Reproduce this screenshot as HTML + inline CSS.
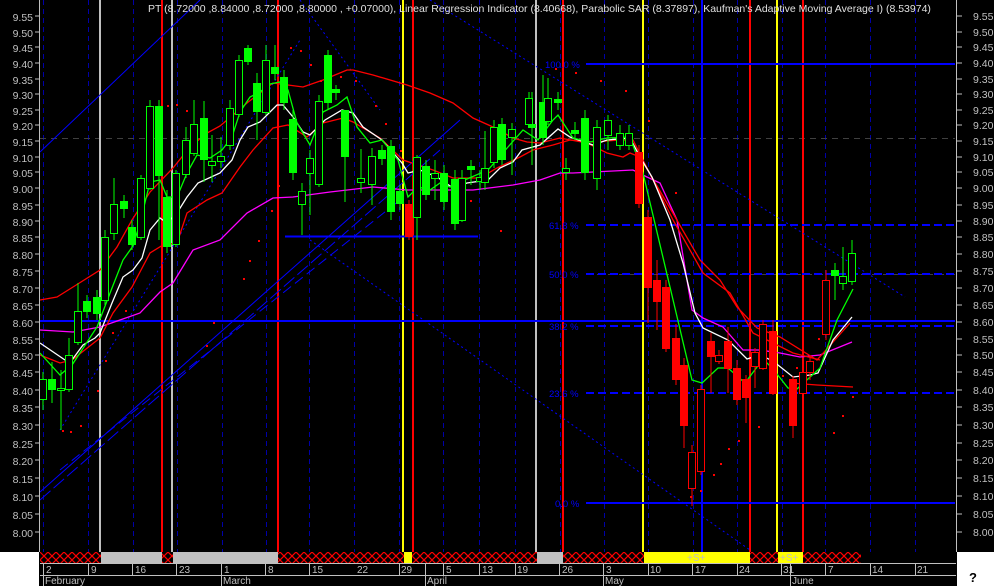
<!DOCTYPE html>
<html><head><meta charset="utf-8"><style>
html,body{margin:0;padding:0;background:#000;width:994px;height:586px;overflow:hidden}
svg{display:block}
text{font-family:"Liberation Sans",sans-serif;font-size:10.5px}
</style></head><body>
<svg width="994" height="586" viewBox="0 0 994 586" xmlns="http://www.w3.org/2000/svg">
<defs>
<pattern id="hx" width="8" height="8" patternUnits="userSpaceOnUse">
<rect width="8" height="8" fill="#000"/>
<path d="M0 0L8 8M8 0L0 8" stroke="#ff0000" stroke-width="1.2"/>
</pattern>
</defs>
<rect width="994" height="586" fill="#000"/>
<g stroke="#0000a8" stroke-width="1" stroke-dasharray="5,4">
<line x1="43.5" y1="0" x2="43.5" y2="552"/><line x1="88.5" y1="0" x2="88.5" y2="552"/><line x1="133.5" y1="0" x2="133.5" y2="552"/><line x1="177.5" y1="0" x2="177.5" y2="552"/><line x1="222.5" y1="0" x2="222.5" y2="552"/><line x1="266.5" y1="0" x2="266.5" y2="552"/><line x1="309.5" y1="0" x2="309.5" y2="552"/><line x1="354.5" y1="0" x2="354.5" y2="552"/><line x1="399.5" y1="0" x2="399.5" y2="552"/><line x1="443.5" y1="0" x2="443.5" y2="552"/><line x1="479.5" y1="0" x2="479.5" y2="552"/><line x1="515.5" y1="0" x2="515.5" y2="552"/><line x1="560.5" y1="0" x2="560.5" y2="552"/><line x1="604.5" y1="0" x2="604.5" y2="552"/><line x1="648.5" y1="0" x2="648.5" y2="552"/><line x1="693.5" y1="0" x2="693.5" y2="552"/><line x1="737.5" y1="0" x2="737.5" y2="552"/><line x1="782.5" y1="0" x2="782.5" y2="552"/><line x1="825.5" y1="0" x2="825.5" y2="552"/><line x1="870.5" y1="0" x2="870.5" y2="552"/><line x1="915.5" y1="0" x2="915.5" y2="552"/>
</g>
<g stroke="#404040" stroke-dasharray="6,5"><line x1="40" y1="138.5" x2="955" y2="138.5"/><line x1="586" y1="274.5" x2="955" y2="274.5"/></g>
<g stroke-width="2">
<line x1="100" y1="0" x2="100" y2="552" stroke="#c0c0c0"/>
<line x1="162" y1="0" x2="162" y2="552" stroke="#ff0000"/>
<line x1="172" y1="0" x2="172" y2="552" stroke="#c0c0c0"/>
<line x1="278" y1="0" x2="278" y2="552" stroke="#ff0000"/>
<line x1="403" y1="0" x2="403" y2="552" stroke="#ffff00"/>
<line x1="413" y1="0" x2="413" y2="552" stroke="#ff0000"/>
<line x1="536" y1="0" x2="536" y2="552" stroke="#c0c0c0"/>
<line x1="563" y1="0" x2="563" y2="552" stroke="#ff0000"/>
<line x1="643" y1="0" x2="643" y2="552" stroke="#ffff00"/>
<line x1="702" y1="0" x2="702" y2="552" stroke="#0000ff"/>
<line x1="750" y1="0" x2="750" y2="552" stroke="#ff0000"/>
<line x1="777" y1="0" x2="777" y2="552" stroke="#ffff00"/>
<line x1="803" y1="0" x2="803" y2="552" stroke="#ff0000"/>
</g>
<g stroke="#0000ff" stroke-width="1" fill="none">
<line x1="40" y1="152" x2="200" y2="0"/>
<line x1="40" y1="492" x2="460" y2="120"/>
<line x1="40" y1="500" x2="440" y2="150" stroke-dasharray="14,4"/>
<line x1="60" y1="470" x2="400" y2="200" stroke-dasharray="10,5"/>
<line x1="60" y1="430" x2="300" y2="40" stroke-dasharray="2,3"/>
<line x1="430" y1="0" x2="905" y2="297" stroke-dasharray="2,3"/>
<line x1="300" y1="0" x2="380" y2="110" stroke-dasharray="2,3"/>
<line x1="310" y1="240" x2="750" y2="550" stroke-dasharray="2,3"/>
<line x1="285" y1="236.5" x2="478" y2="236.5" stroke-width="2"/>
<line x1="40" y1="321" x2="955" y2="321" stroke-width="2"/>
<line x1="586" y1="64" x2="955" y2="64" stroke-width="2"/>
<line x1="586" y1="225" x2="955" y2="225" stroke-width="2" stroke-dasharray="8,4"/>
<line x1="586" y1="274" x2="955" y2="274" stroke-width="2" stroke-dasharray="8,4"/>
<line x1="586" y1="326" x2="955" y2="326" stroke-width="2" stroke-dasharray="8,4"/>
<line x1="586" y1="393" x2="955" y2="393" stroke-width="2" stroke-dasharray="8,4"/>
<line x1="586" y1="503" x2="955" y2="503" stroke-width="2"/>
</g>
<g fill="#0000ff" style="font-size:9.5px"><text x="545" y="68" style="font-size:9.5px">100.0 %</text><text x="549" y="229" style="font-size:9.5px">61.8 %</text><text x="549" y="278" style="font-size:9.5px">50.0 %</text><text x="549" y="330" style="font-size:9.5px">38.2 %</text><text x="549" y="397" style="font-size:9.5px">23.6 %</text><text x="555" y="507" style="font-size:9.5px">0.0 %</text></g>
<g fill="#ff0000">
<rect x="62" y="430" width="2" height="2"/><rect x="70" y="431" width="2" height="2"/><rect x="80" y="425" width="2" height="2"/><rect x="97" y="390" width="2" height="2"/><rect x="105" y="360" width="2" height="2"/><rect x="112" y="332" width="2" height="2"/><rect x="125" y="310" width="2" height="2"/><rect x="167" y="105" width="2" height="2"/><rect x="176" y="104" width="2" height="2"/><rect x="186" y="110" width="2" height="2"/><rect x="206" y="345" width="2" height="2"/><rect x="213" y="322" width="2" height="2"/><rect x="243" y="278" width="2" height="2"/><rect x="249" y="260" width="2" height="2"/><rect x="258" y="240" width="2" height="2"/><rect x="271" y="210" width="2" height="2"/><rect x="278" y="185" width="2" height="2"/><rect x="290" y="47" width="2" height="2"/><rect x="300" y="50" width="2" height="2"/><rect x="310" y="64" width="2" height="2"/><rect x="320" y="80" width="2" height="2"/><rect x="330" y="65" width="2" height="2"/><rect x="340" y="76" width="2" height="2"/><rect x="355" y="80" width="2" height="2"/><rect x="375" y="105" width="2" height="2"/><rect x="385" y="123" width="2" height="2"/><rect x="400" y="150" width="2" height="2"/><rect x="418" y="168" width="2" height="2"/><rect x="445" y="180" width="2" height="2"/><rect x="470" y="200" width="2" height="2"/><rect x="500" y="230" width="2" height="2"/><rect x="555" y="68" width="2" height="2"/><rect x="575" y="72" width="2" height="2"/><rect x="600" y="80" width="2" height="2"/><rect x="625" y="90" width="2" height="2"/><rect x="648" y="120" width="2" height="2"/><rect x="675" y="192" width="2" height="2"/><rect x="690" y="496" width="2" height="2"/><rect x="700" y="490" width="2" height="2"/><rect x="713" y="474" width="2" height="2"/><rect x="720" y="463" width="2" height="2"/><rect x="728" y="448" width="2" height="2"/><rect x="738" y="440" width="2" height="2"/><rect x="758" y="426" width="2" height="2"/><rect x="782" y="375" width="2" height="2"/><rect x="796" y="367" width="2" height="2"/><rect x="818" y="338" width="2" height="2"/><rect x="833" y="432" width="2" height="2"/><rect x="842" y="415" width="2" height="2"/><rect x="852" y="396" width="2" height="2"/>
</g>
<g fill="none" stroke-width="1.3">
<polyline stroke="#ff00ff" points="40,330 73,332 100,327 120,320 140,313 160,292 173,283 193,250 220,240 247,213 273,198 293,197 330,192 373,187 407,190 473,190 513,185 540,180 560,173 573,173 633,170 647,177 660,183 677,220 692,310 703,318 723,327 743,350 760,350 780,353 800,357 820,355 852,342"/>
<polyline stroke="#ff0000" points="40,300 57,297 73,287 100,270 117,247 132,220 150,192 173,168 190,147 207,133 220,126 233,115 247,103 273,83 303,87 323,80 347,70 353,70 373,75 407,85 430,93 453,103 473,118 493,127 513,138 527,142 540,143 560,138 587,143 607,153 623,157 630,153 640,157 667,203 700,260 720,280 737,307 757,328 780,337 817,360 850,323"/>
<polyline stroke="#ff0000" points="40,355 60,363 72,360 100,338 113,313 132,287 150,253 163,245 177,243 187,213 207,200 222,193 240,167 253,150 273,128 288,125 307,137 323,123 343,118 353,122 380,138 403,160 433,170 453,178 480,178 497,168 520,157 533,150 553,145 570,140 593,142 620,140 633,140 643,160 673,220 703,273 730,293 753,333 793,353 820,360"/>
<polyline stroke="#ff0000" points="790,383 817,385 853,387"/>
<polyline stroke="#ffffff" points="40,343 65,360 72,360 83,345 95,338 100,333 112,303 123,277 133,270 142,258 150,230 160,218 167,223 177,213 187,197 198,183 220,173 232,160 240,140 248,127 260,122 277,105 283,105 293,117 303,132 310,135 325,120 342,110 353,113 363,127 382,140 402,163 408,173 420,170 437,177 453,188 467,183 488,180 500,168 513,162 522,150 540,145 558,129 570,137 593,145 607,140 630,138 640,157 652,177 670,220 683,263 695,313 703,328 728,340 747,359 760,355 773,361 793,377 810,375 818,373 833,340 852,317"/>
<polyline stroke="#00ff00" points="40,353 60,375 72,365 97,327 112,288 123,260 133,246 140,223 150,182 160,180 167,197 177,197 187,173 197,155 210,158 222,150 232,137 240,112 250,97 260,92 270,84 280,82 288,90 297,123 310,145 323,112 337,105 347,97 357,127 370,143 382,140 398,160 408,197 418,187 430,190 440,183 450,187 460,182 488,170 508,147 523,130 538,140 553,120 558,115 573,138 590,142 607,138 630,137 643,173 692,380 702,383 718,368 728,368 745,383 763,359 773,369 788,388 797,389 820,368 837,320 853,289"/>
</g>
<g stroke="#00ff00" fill="#00ff00">
<path d="M52 362V403M87 295V318M97 290V320M124 195V218M132 220V250M159 100V240M167 190V253M204 101V182M248 45V65M257 73V140M275 45V80M284 70V110M293 110V180M328 50V110M336 85V100M345 115V202M382 145V165M391 140V220M400 185V210M426 160V200M444 165V210M455 170V230M471 160V185M502 118V165M532 92V165M543 75V145M558 92V110M575 122V140M585 110V180M835 263V300" fill="none"/>
<rect x="48.5" y="379.5" width="7" height="10"/><rect x="83.5" y="301.5" width="7" height="10"/><rect x="93.5" y="297.5" width="7" height="16"/><rect x="120.5" y="201.5" width="7" height="7"/><rect x="128.5" y="227.5" width="7" height="17"/><rect x="155.5" y="106.5" width="7" height="69"/><rect x="163.5" y="197.5" width="7" height="49"/><rect x="200.5" y="118.5" width="7" height="41"/><rect x="244.5" y="48.5" width="7" height="13"/><rect x="253.5" y="83.5" width="7" height="28"/><rect x="271.5" y="67.5" width="7" height="6"/><rect x="280.5" y="77.5" width="7" height="25"/><rect x="289.5" y="119.5" width="7" height="53"/><rect x="324.5" y="55.5" width="7" height="47"/><rect x="332.5" y="89.5" width="7" height="3"/><rect x="341.5" y="110.5" width="7" height="46"/><rect x="378.5" y="150.5" width="7" height="8"/><rect x="387.5" y="146.5" width="7" height="65"/><rect x="396.5" y="191.5" width="7" height="12"/><rect x="422.5" y="166.5" width="7" height="28"/><rect x="440.5" y="173.5" width="7" height="28"/><rect x="451.5" y="179.5" width="7" height="44"/><rect x="467.5" y="166.5" width="7" height="3"/><rect x="498.5" y="124.5" width="7" height="35"/><rect x="528.5" y="124.5" width="7" height="3"/><rect x="539.5" y="102.5" width="7" height="35"/><rect x="554.5" y="99.5" width="7" height="3"/><rect x="571.5" y="130.5" width="7" height="3"/><rect x="581.5" y="118.5" width="7" height="54"/><rect x="831.5" y="270.5" width="7" height="5"/>
</g>
<g stroke="#00ff00" fill="#000">
<path d="M43 372V410M61 370V430M69 338V392M78 283V345M105 230V305M114 178V240M141 175V240M150 100V190M176 170V247M186 127V178M194 100V156M212 135V182M221 137V168M230 100V150M239 55V117M266 45V115M302 183V235M310 150V215M319 95V187M361 149V193M372 148V205M417 155V240M435 160V200M462 170V222M480 170V190M485 131V190M494 120V168M512 123V175M529 92V128M548 78V125M566 158V180M597 120V190M608 115V150M620 125V150M629 125V150M843 247V290M852 240V285" fill="none"/>
<rect x="39.5" y="379.5" width="7" height="20"/><rect x="57.5" y="388.5" width="7" height="2"/><rect x="65.5" y="355.5" width="7" height="34"/><rect x="74.5" y="311.5" width="7" height="31"/><rect x="101.5" y="237.5" width="7" height="63"/><rect x="110.5" y="204.5" width="7" height="29"/><rect x="137.5" y="178.5" width="7" height="59"/><rect x="146.5" y="106.5" width="7" height="82"/><rect x="172.5" y="173.5" width="7" height="71"/><rect x="182.5" y="140.5" width="7" height="34"/><rect x="190.5" y="124.5" width="7" height="29"/><rect x="208.5" y="161.5" width="7" height="4"/><rect x="217.5" y="156.5" width="7" height="5"/><rect x="226.5" y="108.5" width="7" height="37"/><rect x="235.5" y="60.5" width="7" height="54"/><rect x="262.5" y="60.5" width="7" height="52"/><rect x="298.5" y="191.5" width="7" height="13"/><rect x="306.5" y="158.5" width="7" height="15"/><rect x="315.5" y="101.5" width="7" height="83"/><rect x="357.5" y="178.5" width="7" height="4"/><rect x="368.5" y="156.5" width="7" height="28"/><rect x="413.5" y="157.5" width="7" height="60"/><rect x="431.5" y="173.5" width="7" height="5"/><rect x="458.5" y="178.5" width="7" height="42"/><rect x="476.5" y="177.5" width="7" height="4"/><rect x="481.5" y="168.5" width="7" height="14"/><rect x="490.5" y="127.5" width="7" height="35"/><rect x="508.5" y="129.5" width="7" height="8"/><rect x="525.5" y="98.5" width="7" height="26"/><rect x="544.5" y="98.5" width="7" height="23"/><rect x="562.5" y="168.5" width="7" height="4"/><rect x="593.5" y="127.5" width="7" height="51"/><rect x="604.5" y="120.5" width="7" height="15"/><rect x="616.5" y="133.5" width="7" height="12"/><rect x="625.5" y="133.5" width="7" height="12"/><rect x="839.5" y="276.5" width="7" height="7"/><rect x="848.5" y="253.5" width="7" height="28"/>
</g>
<g stroke="#ff0000" fill="#ff0000">
<path d="M409 200V240M639 145V208M648 210V323M657 260V330M666 280V352M676 324V385M684 358V448M711 333V393M728 327V393M737 360V405M746 375V423M773 320V395M793 376V438" fill="none"/>
<rect x="405.5" y="204.5" width="7" height="32"/><rect x="635.5" y="152.5" width="7" height="51"/><rect x="644.5" y="217.5" width="7" height="70"/><rect x="653.5" y="280.5" width="7" height="21"/><rect x="662.5" y="287.5" width="7" height="61"/><rect x="672.5" y="338.5" width="7" height="41"/><rect x="680.5" y="365.5" width="7" height="60"/><rect x="707.5" y="341.5" width="7" height="15"/><rect x="724.5" y="341.5" width="7" height="27"/><rect x="733.5" y="368.5" width="7" height="31"/><rect x="742.5" y="379.5" width="7" height="18"/><rect x="769.5" y="331.5" width="7" height="62"/><rect x="789.5" y="379.5" width="7" height="46"/>
</g>
<g stroke="#ff0000" fill="#000">
<path d="M692 445V506M701 385V475M719 350V364M755 348V388M763 320V370M803 362V407M810 355V380M826 270V340" fill="none"/>
<rect x="688.5" y="452.5" width="7" height="36"/><rect x="697.5" y="389.5" width="7" height="82"/><rect x="715.5" y="355.5" width="7" height="6"/><rect x="751.5" y="352.5" width="7" height="14"/><rect x="759.5" y="324.5" width="7" height="44"/><rect x="799.5" y="372.5" width="7" height="21"/><rect x="806.5" y="361.5" width="7" height="11"/><rect x="822.5" y="280.5" width="7" height="54"/>
</g>
<text x="148" y="12" fill="#e0e0e0">PT (8.72000 ,8.84000 ,8.72000 ,8.80000 , +0.07000), Linear Regression Indicator (8.40668), Parabolic SAR (8.37897), Kaufman's Adaptive Moving Average I) (8.53974)</text>
<g stroke="#c0c0c0" stroke-width="1">
<line x1="39.5" y1="0" x2="39.5" y2="552"/>
<line x1="956.5" y1="0" x2="956.5" y2="552"/>
</g>
<g fill="#c0c0c0" text-anchor="end">
<text x="33" y="21">9.55</text><text x="33" y="37">9.50</text><text x="33" y="52">9.45</text><text x="33" y="68">9.40</text><text x="33" y="84">9.35</text><text x="33" y="99">9.30</text><text x="33" y="115">9.25</text><text x="33" y="130">9.20</text><text x="33" y="146">9.15</text><text x="33" y="162">9.10</text><text x="33" y="177">9.05</text><text x="33" y="193">9.00</text><text x="33" y="210">8.95</text><text x="33" y="226">8.90</text><text x="33" y="242">8.85</text><text x="33" y="259">8.80</text><text x="33" y="276">8.75</text><text x="33" y="293">8.70</text><text x="33" y="310">8.65</text><text x="33" y="327">8.60</text><text x="33" y="344">8.55</text><text x="33" y="360">8.50</text><text x="33" y="377">8.45</text><text x="33" y="395">8.40</text><text x="33" y="412">8.35</text><text x="33" y="430">8.30</text><text x="33" y="448">8.25</text><text x="33" y="465">8.20</text><text x="33" y="483">8.15</text><text x="33" y="501">8.10</text><text x="33" y="519">8.05</text><text x="33" y="537">8.00</text>
</g>
<g fill="#c0c0c0">
<text x="973" y="20">9.55</text><text x="973" y="36">9.50</text><text x="973" y="51">9.45</text><text x="973" y="67">9.40</text><text x="973" y="83">9.35</text><text x="973" y="98">9.30</text><text x="973" y="114">9.25</text><text x="973" y="129">9.20</text><text x="973" y="145">9.15</text><text x="973" y="161">9.10</text><text x="973" y="176">9.05</text><text x="973" y="192">9.00</text><text x="973" y="209">8.95</text><text x="973" y="225">8.90</text><text x="973" y="241">8.85</text><text x="973" y="258">8.80</text><text x="973" y="275">8.75</text><text x="973" y="292">8.70</text><text x="973" y="309">8.65</text><text x="973" y="326">8.60</text><text x="973" y="343">8.55</text><text x="973" y="359">8.50</text><text x="973" y="376">8.45</text><text x="973" y="394">8.40</text><text x="973" y="411">8.35</text><text x="973" y="429">8.30</text><text x="973" y="447">8.25</text><text x="973" y="464">8.20</text><text x="973" y="482">8.15</text><text x="973" y="500">8.10</text><text x="973" y="518">8.05</text><text x="973" y="536">8.00</text>
</g>
<g stroke="#c0c0c0">
<path d="M35 16H39M35 32H39M35 47H39M35 63H39M35 79H39M35 94H39M35 110H39M35 125H39M35 141H39M35 157H39M35 172H39M35 188H39M35 205H39M35 221H39M35 237H39M35 254H39M35 271H39M35 288H39M35 305H39M35 322H39M35 339H39M35 355H39M35 372H39M35 390H39M35 407H39M35 425H39M35 443H39M35 460H39M35 478H39M35 496H39M35 514H39M35 532H39"/>
<path d="M957 16H962M957 32H962M957 47H962M957 63H962M957 79H962M957 94H962M957 110H962M957 125H962M957 141H962M957 157H962M957 172H962M957 188H962M957 205H962M957 221H962M957 237H962M957 254H962M957 271H962M957 288H962M957 305H962M957 322H962M957 339H962M957 355H962M957 372H962M957 390H962M957 407H962M957 425H962M957 443H962M957 460H962M957 478H962M957 496H962M957 514H962M957 532H962"/>
</g>
<rect x="40" y="552" width="821" height="11" fill="url(#hx)"/>
<rect x="101" y="552" width="61" height="11" fill="#c0c0c0"/>
<rect x="173" y="552" width="105" height="11" fill="#c0c0c0"/>
<rect x="404" y="552" width="8" height="11" fill="#ffff00"/>
<rect x="537" y="552" width="26" height="11" fill="#c0c0c0"/>
<rect x="644" y="552" width="106" height="11" fill="#ffff00"/>
<rect x="778" y="552" width="25" height="11" fill="#ffff00"/>
<g fill="#c0c0c0"><text x="687" y="561" style="font-size:10px">+S+</text><text x="780" y="561" style="font-size:10px">+S+</text></g>
<rect x="0" y="552" width="39" height="34" fill="#fff"/>
<rect x="957" y="552" width="37" height="34" fill="#fff"/>
<text x="969" y="582" fill="#000" style="font-weight:bold;font-size:13px">?</text>
<g stroke="#c0c0c0">
<line x1="40" y1="563.5" x2="956" y2="563.5"/>
<line x1="40" y1="575.5" x2="956" y2="575.5"/>
<path d="M43.5 564V575M88.5 564V575M132.5 564V575M176.5 564V575M221.5 564V575M265.5 564V575M309.5 564V575M399.5 564V575M425.5 564V575M443.5 564V575M479.5 564V575M515.5 564V575M559.5 564V575M603.5 564V575M648.5 564V575M692.5 564V575M737.5 564V575M781.5 564V575M790.5 564V575M825.5 564V575M870.5 564V575M915.5 564V575"/>
<path d="M43.5 576V586M221.5 576V586M425.5 576V586M603.5 576V586M790.5 576V586"/>
</g>
<g fill="#c0c0c0">
<text x="46" y="573" style="font-size:10px">2</text><text x="91" y="573" style="font-size:10px">9</text><text x="135" y="573" style="font-size:10px">16</text><text x="179" y="573" style="font-size:10px">23</text><text x="224" y="573" style="font-size:10px">1</text><text x="268" y="573" style="font-size:10px">8</text><text x="312" y="573" style="font-size:10px">15</text><text x="357" y="573" style="font-size:10px">22</text><text x="401" y="573" style="font-size:10px">29</text><text x="446" y="573" style="font-size:10px">5</text><text x="482" y="573" style="font-size:10px">13</text><text x="517" y="573" style="font-size:10px">19</text><text x="562" y="573" style="font-size:10px">26</text><text x="606" y="573" style="font-size:10px">3</text><text x="650" y="573" style="font-size:10px">10</text><text x="695" y="573" style="font-size:10px">17</text><text x="739" y="573" style="font-size:10px">24</text><text x="783" y="573" style="font-size:10px">31</text><text x="828" y="573" style="font-size:10px">7</text><text x="872" y="573" style="font-size:10px">14</text><text x="917" y="573" style="font-size:10px">21</text>
<text x="45" y="584" style="font-size:10px">February</text><text x="223" y="584" style="font-size:10px">March</text><text x="427" y="584" style="font-size:10px">April</text><text x="605" y="584" style="font-size:10px">May</text><text x="792" y="584" style="font-size:10px">June</text>
</g>
</svg>
</body></html>
